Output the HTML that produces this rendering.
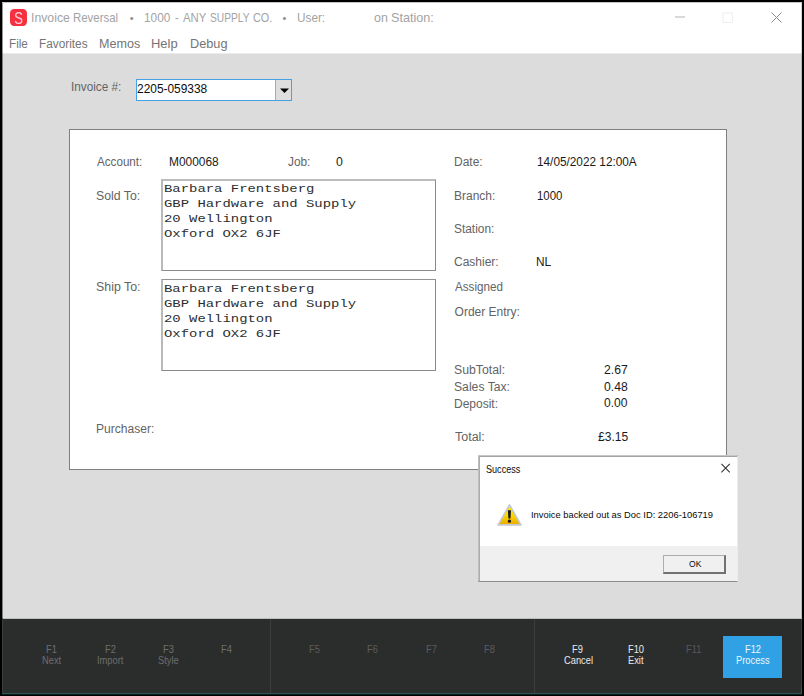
<!DOCTYPE html>
<html lang="en">
<head>
<meta charset="utf-8">
<title>Invoice Reversal</title>
<style>
*{box-sizing:border-box;margin:0;padding:0}
html,body{width:804px;height:696px;overflow:hidden;background:#000}
body:after{content:'';position:absolute;left:2px;top:694px;width:800px;height:1px;background:#0c1a1b}
body{position:relative;font-family:'Liberation Sans',Arial,sans-serif;font-size:12px;color:#111}
.t{position:absolute;white-space:pre;line-height:1;transform-origin:0 0}
#win{position:absolute;left:2px;top:2px;width:800px;height:692px;background:#dcdcdc;overflow:hidden}
#head{position:absolute;left:0;top:0;width:800px;height:52px;background:#fff;border-bottom:1px solid #ebebeb}
#panel{position:absolute;left:67px;top:127px;width:658px;height:341px;background:#fff;border:1px solid #7f7f7f}
.ta{position:absolute;border-style:solid;border-width:1px 1px 1px 2px;border-color:#939393 #8a8a8a #8a8a8a #b9b9b9;background:#fff;font-family:'Liberation Mono','Courier New',monospace;font-size:11.5px;color:#2e2e2e;overflow:hidden}
.ta1{border-top:2px solid #bcbcbc}
#combo{position:absolute;left:134px;top:77px;width:156px;height:22px;background:#fff;border:1px solid #45a2e4}
#combo .btn{position:absolute;right:0;top:0;width:16px;height:20px;background:#dedede;border-left:1px solid #a9a9a9}
#bar{position:absolute;left:0;top:616px;width:800px;height:76px;background:#2b2d2d;border-bottom:1px solid #2f5557;border-top:1px solid #bcbcbc}
.e{position:absolute}
.sep{position:absolute;top:0;width:1px;height:74px;background:#3b3d3d}
#f12{position:absolute;left:721px;top:17px;width:59px;height:42px;background:#30a1e5}
#dlg{position:absolute;left:476px;top:453px;width:260px;height:127px;background:#fff;border-style:solid;border-color:#a4a4a4 #ededed #8c8c8c #adadad;border-width:2px 1px 1px 2px}
#dlg:before{content:'';position:absolute;left:-2px;top:-2px;width:259px;height:1px;background:#c6c6c6}
#dlg:after{content:'';position:absolute;left:-2px;top:-2px;width:1px;height:126px;background:#bdbdbd}
#dlgfoot{position:absolute;left:0;top:89px;width:257px;height:35px;background:#f0f0f0}
#ok{position:absolute;left:183px;top:98px;width:63px;height:19px;background:#f0f0f0;border-style:solid;border-width:1px 2px 2px 1px;border-color:#adadad #727272 #727272 #adadad}
</style>
</head>
<body>
<div id="win">
  <div id="head">
    <svg class="t" style="left:8px;top:7px" width="17" height="17" viewBox="0 0 17 17"><rect width="17" height="17" rx="4.2" fill="#f5313f"/><text x="0" y="0" transform="translate(8.55 14.75) scale(0.8 1)" text-anchor="middle" font-family="Liberation Sans, sans-serif" font-size="16.2" fill="#ffdfe2" fill-opacity="0.92">S</text></svg>
    <span class="t" style="left:28.65px;top:9.00px;font-size:13.3px;color:#a3a3a3;transform:scaleX(0.9217);">Invoice</span>
    <span class="t" style="left:71.44px;top:9.00px;font-size:13.3px;color:#a3a3a3;transform:scaleX(0.8594);">Reversal</span>
    <span class="t" style="left:127.70px;top:11.00px;font-size:11px;color:#8d8d8d;">•</span>
    <span class="t" style="left:142.31px;top:9.00px;font-size:13.3px;color:#a3a3a3;transform:scaleX(0.8893);">1000</span>
    <span class="t" style="left:173.08px;top:9.00px;font-size:13.3px;color:#a3a3a3;transform:scaleX(0.8308);">-</span>
    <span class="t" style="left:180.90px;top:9.00px;font-size:13.3px;color:#a3a3a3;transform:scaleX(0.8519);">ANY</span>
    <span class="t" style="left:207.83px;top:9.00px;font-size:13.3px;color:#a3a3a3;transform:scaleX(0.7662);">SUPPLY</span>
    <span class="t" style="left:251.29px;top:9.00px;font-size:13.3px;color:#a3a3a3;transform:scaleX(0.8184);">CO.</span>
    <span class="t" style="left:280.60px;top:11.00px;font-size:11px;color:#8d8d8d;">•</span>
    <span class="t" style="left:294.82px;top:9.00px;font-size:13.3px;color:#a3a3a3;transform:scaleX(0.8847);">User:</span>
    <span class="t" style="left:371.63px;top:9.00px;font-size:13.3px;color:#a3a3a3;transform:scaleX(0.9333);">on</span>
    <span class="t" style="left:388.79px;top:9.00px;font-size:13.3px;color:#a3a3a3;transform:scaleX(0.9465);">Station:</span>
    <span class="t" style="left:6.75px;top:36.00px;font-size:12.3px;color:#757575;transform:scaleX(0.9534);">File</span>
    <span class="t" style="left:36.74px;top:36.00px;font-size:12.3px;color:#757575;transform:scaleX(0.9604);">Favorites</span>
    <span class="t" style="left:96.78px;top:36.00px;font-size:12.3px;color:#757575;transform:scaleX(1.0231);">Memos</span>
    <span class="t" style="left:149.45px;top:36.00px;font-size:12.3px;color:#757575;transform:scaleX(1.0526);">Help</span>
    <span class="t" style="left:187.67px;top:36.00px;font-size:12.3px;color:#757575;transform:scaleX(1.0348);">Debug</span>
    <svg class="t" style="left:668px;top:6px" width="120" height="20" viewBox="0 0 120 20">
      <rect x="5" y="8.5" width="10" height="1" fill="#b4b4b4"/>
      <rect x="53" y="5" width="9.4" height="9.4" fill="none" stroke="#eeeeee" stroke-width="1"/>
      <path d="M101.5 4.5 L111.5 14.5 M111.5 4.5 L101.5 14.5" stroke="#8c8c8c" stroke-width="1" fill="none"/>
    </svg>
  </div>

  <span class="t" style="left:68.72px;top:79.00px;font-size:12px;color:#636363;transform:scaleX(0.98);">Invoice #:</span>
  <div id="combo">
    <span class="t" style="left:0.30px;top:3.00px;font-size:12px;color:#0c0c0c;transform:scaleX(0.993);">2205-059338</span>
    <div class="btn"></div>
    <svg class="t" style="right:1px;top:8px" width="11" height="6" viewBox="0 0 11 6"><path d="M1 0.6 H10 L5.5 4.9 Z" fill="#000"/></svg>
  </div>

  <div id="panel">
    <span class="t" style="left:26.90px;top:26.00px;font-size:12px;color:#636363;transform:scaleX(0.9705);">Account:</span>
    <span class="t" style="left:99.21px;top:26.00px;font-size:12px;color:#1a1a1a;transform:scaleX(0.9918);">M000068</span>
    <span class="t" style="left:218.35px;top:26.00px;font-size:12px;color:#636363;transform:scaleX(0.986);">Job:</span>
    <span class="t" style="left:266.19px;top:26.00px;font-size:12px;color:#1a1a1a;transform:scaleX(1.0261);">0</span>
    <span class="t" style="left:26.39px;top:60.00px;font-size:12px;color:#636363;transform:scaleX(1.0241);">Sold To:</span>
    <span class="t" style="left:26.38px;top:151.00px;font-size:12px;color:#636363;transform:scaleX(1.0313);">Ship To:</span>
    <span class="t" style="left:25.90px;top:293.00px;font-size:12px;color:#636363;transform:scaleX(1.0036);">Purchaser:</span>
    <span class="t" style="left:384.10px;top:26.00px;font-size:12px;color:#636363;transform:scaleX(0.9981);">Date:</span>
    <span class="t" style="left:466.72px;top:26.00px;font-size:12px;color:#1a1a1a;transform:scaleX(0.9831);">14/05/2022 12:00A</span>
    <span class="t" style="left:384.10px;top:60.00px;font-size:12px;color:#636363;transform:scaleX(0.9987);">Branch:</span>
    <span class="t" style="left:466.75px;top:60.00px;font-size:12px;color:#1a1a1a;transform:scaleX(0.9545);">1000</span>
    <span class="t" style="left:384.10px;top:93.00px;font-size:12px;color:#636363;transform:scaleX(0.9911);">Station:</span>
    <span class="t" style="left:384.10px;top:126.00px;font-size:12px;color:#636363;transform:scaleX(0.9988);">Cashier:</span>
    <span class="t" style="left:465.61px;top:126.00px;font-size:12px;color:#1a1a1a;transform:scaleX(0.9857);">NL</span>
    <span class="t" style="left:384.60px;top:151.00px;font-size:12px;color:#636363;transform:scaleX(0.9711);">Assigned</span>
    <span class="t" style="left:384.60px;top:176.00px;font-size:12px;color:#636363;">Order Entry:</span>
    <span class="t" style="left:384.49px;top:234.00px;font-size:12px;color:#636363;transform:scaleX(1.0206);">SubTotal:</span>
    <span class="t" style="left:384.49px;top:251.00px;font-size:12px;color:#636363;transform:scaleX(1.015);">Sales Tax:</span>
    <span class="t" style="left:384.00px;top:268.00px;font-size:12px;color:#636363;">Deposit:</span>
    <span class="t" style="left:385.04px;top:301.00px;font-size:12px;color:#636363;transform:scaleX(1.04);">Total:</span>
    <span class="t" style="left:534.09px;top:234.00px;font-size:12px;color:#1a1a1a;transform:scaleX(1.0157);">2.67</span>
    <span class="t" style="left:534.09px;top:251.00px;font-size:12px;color:#1a1a1a;transform:scaleX(1.0157);">0.48</span>
    <span class="t" style="left:534.10px;top:267.00px;font-size:12px;color:#1a1a1a;transform:scaleX(1.0044);">0.00</span>
    <span class="t" style="left:527.55px;top:301.00px;font-size:12px;color:#1a1a1a;transform:scaleX(1.0051);">£3.15</span>
    <div class="ta ta1" style="left:91px;top:49px;width:275px;height:92px"><span class="t" style="left:0.89px;top:2px;transform:scaleX(1.2102)">Barbara Frentsberg</span><span class="t" style="left:0.89px;top:17px;transform:scaleX(1.2102)">GBP Hardware and Supply</span><span class="t" style="left:0.89px;top:32px;transform:scaleX(1.2102)">20 Wellington</span><span class="t" style="left:0.89px;top:47px;transform:scaleX(1.2102)">Oxford OX2 6JF</span></div>
    <div class="ta" style="left:91px;top:149px;width:275px;height:92px"><span class="t" style="left:0.89px;top:3px;transform:scaleX(1.2102)">Barbara Frentsberg</span><span class="t" style="left:0.89px;top:18px;transform:scaleX(1.2102)">GBP Hardware and Supply</span><span class="t" style="left:0.89px;top:33px;transform:scaleX(1.2102)">20 Wellington</span><span class="t" style="left:0.89px;top:48px;transform:scaleX(1.2102)">Oxford OX2 6JF</span></div>
  </div>

  <div id="dlg">
    <span class="t" style="left:6.17px;top:7.00px;font-size:10.6px;color:#0a0a0a;transform:scaleX(0.8561);">Success</span>
    <span class="t" style="left:51.05px;top:53.00px;font-size:9.9px;color:#0a0a0a;transform:scaleX(0.9473);">Invoice backed out as Doc ID: 2206-106719</span>
    <svg class="t" style="left:240px;top:5px" width="12" height="12" viewBox="0 0 12 12"><path d="M1.4 1.9 L9.8 10.3 M9.8 1.9 L1.4 10.3" stroke="#333" stroke-width="1.05" fill="none"/></svg>
    <svg class="t" style="left:16px;top:44px" width="28" height="26" viewBox="0 0 28 26">
      <defs><linearGradient id="wg" x1="0" y1="0" x2="0" y2="1"><stop offset="0" stop-color="#fff200"/><stop offset="0.55" stop-color="#fbd500"/><stop offset="1" stop-color="#eba900"/></linearGradient></defs>
      <path d="M13.5 3.9 L24.9 23.9 H2.2 Z" fill="url(#wg)" stroke="#c5c8ce" stroke-width="1.7" stroke-linejoin="round"/>
      <path d="M11.9 9.2 h3.1 l-0.5 8.3 h-2.1 Z" fill="#15151c"/>
      <circle cx="13.45" cy="20.2" r="1.6" fill="#15151c"/>
    </svg>
    <div id="dlgfoot"></div>
    <div id="ok"></div>
    <span class="t" style="left:208.56px;top:102.00px;font-size:9.8px;color:#0a0a0a;transform:scaleX(0.8741);">OK</span>
  </div>

  <div class="e" style="left:0;top:0;width:800px;height:1px;background:rgba(0,0,0,.22)"></div>
  <div class="e" style="left:0;top:1px;width:1px;height:616px;background:rgba(0,0,0,.42)"></div>
  <div class="e" style="left:799px;top:1px;width:1px;height:616px;background:rgba(0,0,0,.16)"></div>
  <div id="bar">
    <div class="e" style="left:0;top:-1px;width:1px;height:75px;background:#3c3e3e"></div>
    <div class="e" style="left:799px;top:0;width:1px;height:74px;background:linear-gradient(#3a3c3c 0,#3a3c3c 88%,#2f5557 94%)"></div>
    <div class="sep" style="left:268px"></div>
    <div class="sep" style="left:532px"></div>
    <div id="f12"></div>
    <span class="t" style="left:44.36px;top:26.00px;font-size:10.3px;color:#6d6d6d;transform:scaleX(0.905);">F1</span>
    <span class="t" style="left:40.06px;top:37.00px;font-size:10.3px;color:#6d6d6d;transform:scaleX(0.905);">Next</span>
    <span class="t" style="left:102.76px;top:26.00px;font-size:10.3px;color:#6d6d6d;transform:scaleX(0.905);">F2</span>
    <span class="t" style="left:94.72px;top:37.00px;font-size:10.3px;color:#6d6d6d;transform:scaleX(0.905);">Import</span>
    <span class="t" style="left:160.96px;top:26.00px;font-size:10.3px;color:#6d6d6d;transform:scaleX(0.905);">F3</span>
    <span class="t" style="left:156.09px;top:37.00px;font-size:10.3px;color:#6d6d6d;transform:scaleX(0.905);">Style</span>
    <span class="t" style="left:219.04px;top:26.00px;font-size:10.3px;color:#6d6d6d;transform:scaleX(0.905);">F4</span>
    <span class="t" style="left:307.26px;top:26.00px;font-size:10.3px;color:#5c5c5c;transform:scaleX(0.905);">F5</span>
    <span class="t" style="left:365.46px;top:26.00px;font-size:10.3px;color:#5c5c5c;transform:scaleX(0.905);">F6</span>
    <span class="t" style="left:423.76px;top:26.00px;font-size:10.3px;color:#5c5c5c;transform:scaleX(0.905);">F7</span>
    <span class="t" style="left:481.96px;top:26.00px;font-size:10.3px;color:#5c5c5c;transform:scaleX(0.905);">F8</span>
    <span class="t" style="left:570.36px;top:26.00px;font-size:10.3px;color:#e9e9e9;transform:scaleX(0.905);">F9</span>
    <span class="t" style="left:561.53px;top:37.00px;font-size:10.3px;color:#e9e9e9;transform:scaleX(0.905);">Cancel</span>
    <span class="t" style="left:625.75px;top:26.00px;font-size:10.3px;color:#e9e9e9;transform:scaleX(0.905);">F10</span>
    <span class="t" style="left:625.87px;top:37.00px;font-size:10.3px;color:#e9e9e9;transform:scaleX(0.905);">Exit</span>
    <span class="t" style="left:684.19px;top:26.00px;font-size:10.3px;color:#585858;transform:scaleX(0.905);">F11</span>
    <span class="t" style="left:742.65px;top:26.00px;font-size:10.3px;color:#eef6fc;transform:scaleX(0.905);">F12</span>
    <span class="t" style="left:733.83px;top:37.00px;font-size:10.3px;color:#eef6fc;transform:scaleX(0.905);">Process</span>
  </div>
</div>
</body>
</html>
